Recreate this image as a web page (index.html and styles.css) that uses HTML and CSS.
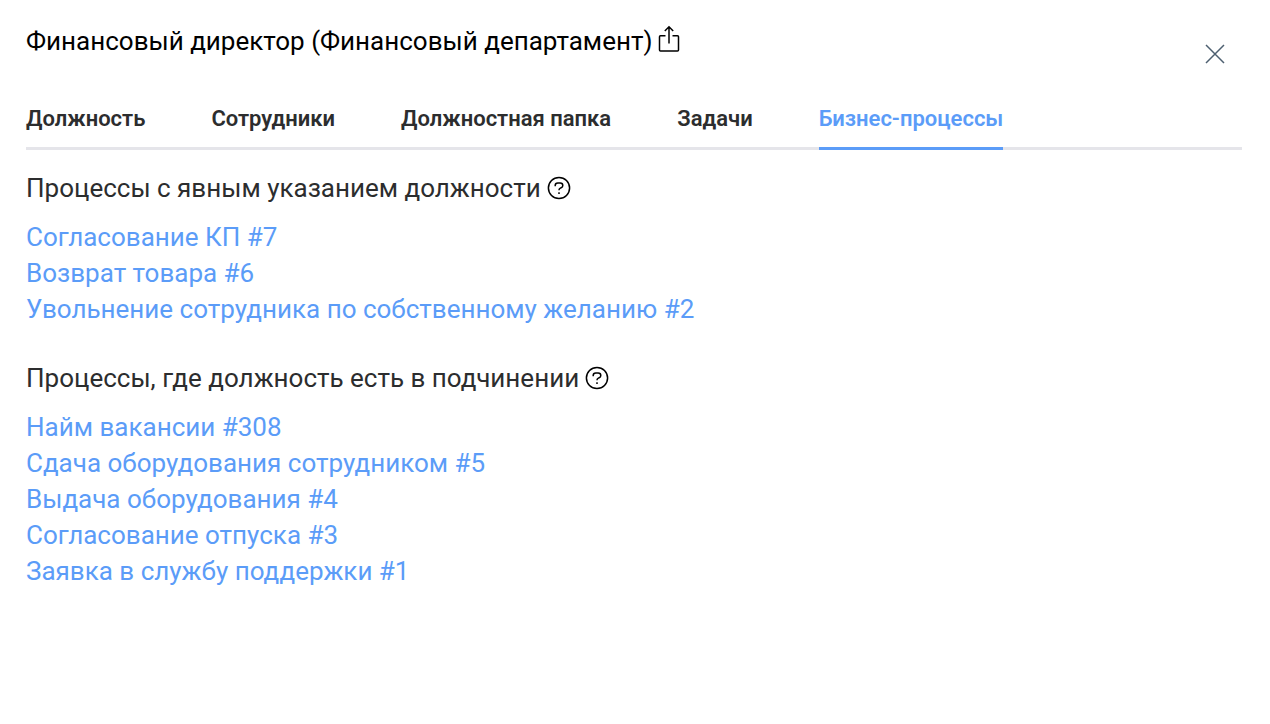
FILE: index.html
```html
<!DOCTYPE html>
<html lang="ru">
<head>
  <meta charset="UTF-8"/>
  <meta name="viewport" content="width=device-width, initial-scale=1.0"/>
  <title>Финансовый директор</title>
  <link rel="stylesheet" href="styles.css">
</head>
<body>
<div class="panel">
  <header class="panel-header">
    <div class="panel-title">
      <h1>Финансовый директор (Финансовый департамент)</h1>
      <button class="icon-btn" type="button" aria-label="Поделиться">
        <svg width="22" height="30" viewBox="0 0 22 30">
          <path d="M7.5 12.7H2.5Q1.5 12.7 1.5 13.7V27Q1.5 28 2.5 28H19.5Q20.5 28 20.5 27V13.7Q20.5 12.7 19.5 12.7H14.5M11 20.5V4M6.8 8L11 3.8L15.2 8"/>
        </svg>
      </button>
    </div>
    <button class="icon-btn close-btn" type="button" aria-label="Закрыть">
      <svg width="20" height="20" viewBox="0 0 20 20">
        <path d="M1 1L19 19M19 1L1 19"/>
      </svg>
    </button>
  </header>
  <nav class="tabs">
    <a href="#" class="tab">Должность</a>
    <a href="#" class="tab">Сотрудники</a>
    <a href="#" class="tab">Должностная папка</a>
    <a href="#" class="tab">Задачи</a>
    <a href="#" class="tab active" aria-current="page">Бизнес-процессы</a>
  </nav>
  <main>
    <section class="process-group">
      <div class="group-title">
        <h2>Процессы с явным указанием должности</h2>
        <button class="icon-btn" type="button" aria-label="Подсказка">
          <svg width="24" height="24" viewBox="0 0 24 24">
            <circle cx="12" cy="12" r="10.6"/>
            <path d="M8.2 10.2V9.5Q8.2 7 10.8 7H13.2Q15.8 7 15.8 9.4Q15.8 11 14.2 11.7L13 12.3Q12 12.8 12 14.2M12 16.2V18"/>
          </svg>
        </button>
      </div>
      <ul class="process-list">
        <li><a href="#">Согласование КП #7</a></li>
        <li><a href="#">Возврат товара #6</a></li>
        <li><a href="#">Увольнение сотрудника по собственному желанию #2</a></li>
      </ul>
    </section>
    <section class="process-group">
      <div class="group-title">
        <h2>Процессы, где должность есть в подчинении</h2>
        <button class="icon-btn" type="button" aria-label="Подсказка">
          <svg width="24" height="24" viewBox="0 0 24 24">
            <circle cx="12" cy="12" r="10.6"/>
            <path d="M8.2 10.2V9.5Q8.2 7 10.8 7H13.2Q15.8 7 15.8 9.4Q15.8 11 14.2 11.7L13 12.3Q12 12.8 12 14.2M12 16.2V18"/>
          </svg>
        </button>
      </div>
      <ul class="process-list">
        <li><a href="#">Найм вакансии #308</a></li>
        <li><a href="#">Сдача оборудования сотрудником #5</a></li>
        <li><a href="#">Выдача оборудования #4</a></li>
        <li><a href="#">Согласование отпуска #3</a></li>
        <li><a href="#">Заявка в службу поддержки #1</a></li>
      </ul>
    </section>
  </main>
</div>
</body>
</html>
```

FILE: styles.css
```css
* {
  box-sizing: border-box;
}
body {
  margin: 0;
  font-family: Roboto, sans-serif;
  font-size: 26px;
  line-height: 36px;
  color: #2c2d2e;
  background-color: #fff;
}
h1, h2 {
  margin: 0;
  font-size: 26px;
  font-weight: 400;
}
h1 {
  color: #000;
}
a {
  color: #5b9cf8;
  text-decoration: none;
}
.panel {
  padding: 23px 28px 24px 26px;
}
.panel-header {
  display: flex;
  justify-content: space-between;
  align-items: flex-start;
  padding-right: 17px;
}
.panel-title {
  display: flex;
  align-items: flex-start;
  gap: 6px;
}
.icon-btn {
  display: flex;
  padding: 0;
  border: none;
  background: none;
  color: #000;
  cursor: pointer;
}
.icon-btn svg {
  fill: none;
  stroke: currentColor;
  stroke-width: 1.5;
}
.close-btn {
  margin-top: 21px;
  color: #4d5f70;
}
.tabs {
  display: flex;
  gap: 66px;
  margin-top: 37px;
  border-bottom: 3px solid #e5e5ea;
}
.tab {
  margin-bottom: -3px;
  padding-bottom: 10px;
  border-bottom: 3px solid transparent;
  font-size: 22px;
  font-weight: 600;
  color: #2c2d2e;
}
.tab.active {
  color: #5b9cf8;
  border-bottom-color: #5b9cf8;
}
.process-group {
  margin-top: 20px;
}
.process-group + .process-group {
  margin-top: 33px;
}
.group-title {
  display: flex;
  align-items: center;
  gap: 6px;
}
.process-list {
  margin: 13px 0 0;
  padding: 0;
  list-style: none;
}
```
